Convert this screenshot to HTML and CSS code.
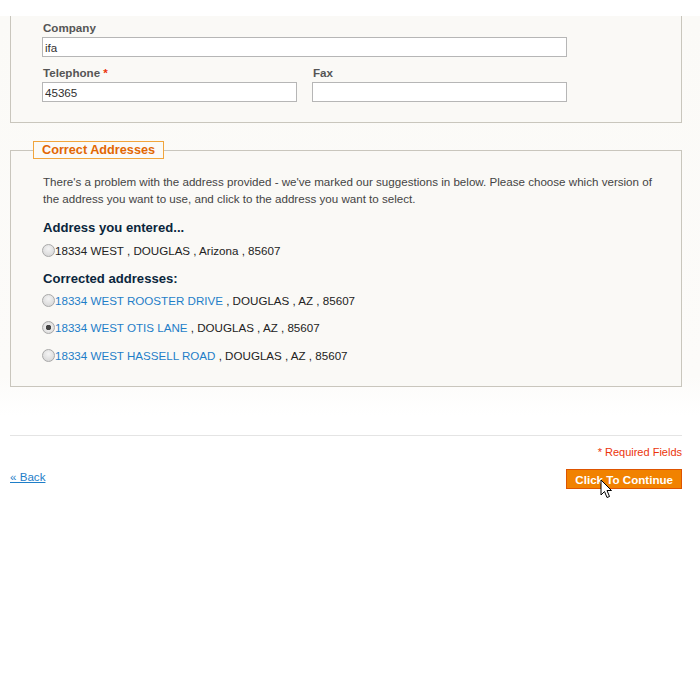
FILE: index.html
```html
<!DOCTYPE html>
<html lang="en">
<head>
    <meta charset="UTF-8">
    <title>Checkout - Billing Address</title>
    <link rel="stylesheet" href="styles.css">
</head>
<body>
    <div class="page">
        <div class="box box-top">
            <div class="field">
                <label for="company">Company</label>
                <input type="text" id="company" class="input-wide" value="ifa">
            </div>
            <div class="field-row">
                <div class="field">
                    <label for="telephone">Telephone <em>*</em></label>
                    <input type="text" id="telephone" value="45365">
                </div>
                <div class="field">
                    <label for="fax">Fax</label>
                    <input type="text" id="fax" value="">
                </div>
            </div>
        </div>

        <fieldset class="box box-addresses">
            <legend>Correct Addresses</legend>
            <p class="intro">There's a problem with the address provided - we've marked our suggestions in below. Please choose which version of the address you want to use, and click to the address you want to select.</p>
            <h4>Address you entered...</h4>
            <label class="choice"><input type="radio" name="address">18334 WEST , DOUGLAS , Arizona , 85607</label>
            <h4 class="corrected">Corrected addresses:</h4>
            <label class="choice"><input type="radio" name="address"><a href="#">18334 WEST ROOSTER DRIVE</a>&nbsp;, DOUGLAS , AZ , 85607</label>
            <label class="choice"><input type="radio" name="address" checked><a href="#">18334 WEST OTIS LANE</a>&nbsp;, DOUGLAS , AZ , 85607</label>
            <label class="choice"><input type="radio" name="address"><a href="#">18334 WEST HASSELL ROAD</a>&nbsp;, DOUGLAS , AZ , 85607</label>
        </fieldset>

        <div class="buttons-set">
            <p class="required">* Required Fields</p>
            <div class="actions">
                <a href="#" class="back-link">&laquo; Back</a>
                <button type="button" class="button">Click To Continue</button>
                <svg class="cursor" width="13" height="20" viewBox="0 0 13 20">
                    <path d="M1 1 L1 16 L4.5 12.5 L7 18.5 L9.5 17.5 L7 11.5 L11.5 11.5 Z" fill="#fff" stroke="#000" stroke-width="1" stroke-linejoin="round"/>
                </svg>
            </div>
        </div>
    </div>
</body>
</html>
```

FILE: styles.css
```css
body {
    margin: 0;
    background: #fff;
    font-family: "Liberation Sans", Arial, sans-serif;
    font-size: 11.6px;
    color: #2f2f2f;
}
.page {
    margin-top: 16px;
    padding: 0 18px 180px 10px;
    background: linear-gradient(to bottom, #fbfaf7 0, #fcfbf9 360px, #fff 400px);
}
.box {
    background-color: #faf9f6;
    border: 1px solid #c9c6bd;
}
.box-top {
    border-top: none;
    padding: 4px 20px 20px 31px;
}
.field {
    display: flex;
    flex-direction: column;
    margin-bottom: 8px;
}
.field-row .field {
    margin-bottom: 0;
}
.field label {
    font-weight: bold;
    color: #555;
    line-height: 15px;
    margin: 0 0 2px 1px;
}
.field label em {
    font-style: normal;
    color: #eb340a;
}
.field input {
    width: 255px;
    height: 20px;
    box-sizing: border-box;
    border: 1px solid #b6b6b6;
    background: #fff;
    padding: 0 2px;
    font-family: inherit;
    font-size: 11.6px;
    color: #2f2f2f;
}
.field .input-wide {
    width: 525px;
}
.field-row {
    display: flex;
    gap: 15px;
}
.box-addresses {
    margin: 18px 0 0;
    padding: 14px 20px 12px 31px;
    min-width: 0;
}
.box-addresses legend {
    margin-left: -9px;
    padding: 0 8px;
    border: 1px solid #f1a53c;
    background: #fbfaf7;
    color: #e26703;
    font-weight: bold;
    font-size: 12.7px;
    line-height: 16px;
}
.intro {
    margin: 0 0 12px 1px;
    line-height: 17px;
    color: #444;
}
.box-addresses h4 {
    margin: 0 0 5px 1px;
    font-size: 13.1px;
    line-height: 18px;
    color: #0a263c;
}
.box-addresses .corrected {
    margin-bottom: 4px;
}
.choice {
    display: flex;
    align-items: center;
    height: 17px;
    margin-bottom: 10.5px;
    color: #222;
}
.choice a {
    color: #1e7ec8;
    text-decoration: none;
}
.choice input {
    appearance: none;
    width: 13px;
    height: 13px;
    margin: 0;
    border: 1px solid #a9a9a9;
    border-radius: 50%;
    background: radial-gradient(circle at 50% 35%, #f4f4f4, #d2d2d2);
    box-sizing: border-box;
}
.choice input:checked {
    background: radial-gradient(circle, #444 0, #444 2.5px, #ececec 3px, #d0d0d0 100%);
}
.buttons-set {
    margin-top: 48px;
    border-top: 1px solid #e4e4e4;
}
.required {
    margin: 8px 0 0;
    text-align: right;
    font-size: 11px;
    line-height: 17px;
    color: #eb340a;
}
.actions {
    position: relative;
    display: flex;
    justify-content: space-between;
    align-items: flex-start;
    margin-top: 8px;
}
.back-link {
    color: #1e7ec8;
    line-height: 17px;
    margin-top: -1px;
}
.button {
    height: 20px;
    padding: 0 8px;
    border: 1px solid #de5400;
    background: #f18200;
    color: #fff;
    font-family: inherit;
    font-size: 11.6px;
    font-weight: bold;
}
.cursor {
    position: absolute;
    right: 69px;
    top: 10px;
}
```
